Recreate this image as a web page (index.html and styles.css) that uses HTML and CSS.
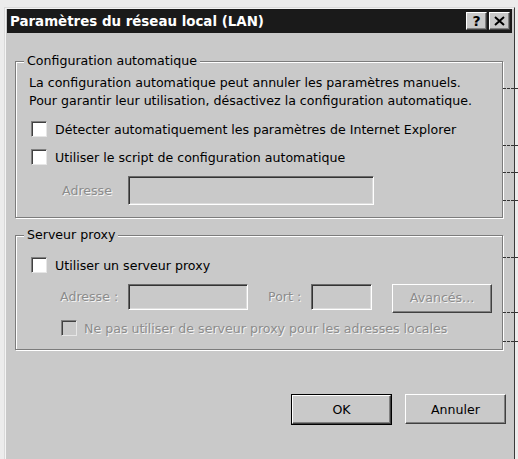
FILE: index.html
```html
<!DOCTYPE html>
<html lang="fr">
<head>
<meta charset="utf-8">
<title>Paramètres du réseau local (LAN)</title>
<link rel="stylesheet" href="styles.css">
</head>
<body>
<div class="window">
  <div class="titlebar">
    <span class="title">Paramètres du réseau local (LAN)</span>
    <div class="tbtns">
      <span class="tbtn help">?</span>
      <span class="tbtn close"><svg width="11" height="10" viewBox="0 0 11 10"><path d="M1 1 L10 9 M10 1 L1 9" stroke="#000" stroke-width="2"/></svg></span>
    </div>
  </div>
  <div class="content">
    <fieldset class="group g1">
      <legend>Configuration automatique</legend>
      <p class="desc">La configuration automatique peut annuler les paramètres manuels.<br>Pour garantir leur utilisation, désactivez la configuration automatique.</p>
      <label class="cbrow r1"><span class="cb"></span>Détecter automatiquement les paramètres de Internet Explorer</label>
      <label class="cbrow r2"><span class="cb"></span>Utiliser le script de configuration automatique</label>
      <div class="addr-row">
        <span class="dis lbl-addr">Adresse</span>
        <span class="input in-script"></span>
      </div>
    </fieldset>
    <fieldset class="group g2">
      <legend>Serveur proxy</legend>
      <label class="cbrow r3"><span class="cb"></span>Utiliser un serveur proxy</label>
      <div class="proxy-row">
        <span class="dis lbl-paddr">Adresse :</span>
        <span class="input in-addr"></span>
        <span class="dis lbl-port">Port :</span>
        <span class="input in-port"></span>
        <span class="btn btn-adv dis">Avancés...</span>
      </div>
      <label class="cbrow r4"><span class="cb cb-dis"></span><span class="dis">Ne pas utiliser de serveur proxy pour les adresses locales</span></label>
    </fieldset>
    <div class="actions">
      <span class="btn btn-ok"><span class="btn-in">OK</span></span>
      <span class="btn btn-cancel">Annuler</span>
    </div>
  </div>
  <div class="ticks">
    <span class="tick" style="top:88px"></span>
    <span class="tick" style="top:145px"></span>
    <span class="tick" style="top:172px"></span>
    <span class="tick" style="top:200px"></span>
    <span class="tick" style="top:257px"></span>
    <span class="tick" style="top:312px"></span>
    <span class="tick" style="top:341px"></span>
  </div>
</div>
</body>
</html>
```
FILE: styles.css
```css
* { box-sizing: border-box; }
html, body { margin: 0; padding: 0; }
body {
  background: #ececec;
  width: 518px;
  height: 459px;
  overflow: hidden;
  font-family: "DejaVu Sans", "Liberation Sans", sans-serif;
  font-size: 12.6px;
  color: #000;
}
.window {
  position: relative;
  margin: 7px 0 0 4px;
  width: 511px;
  height: 460px;
  background: #c9c9c9;
  border-left: 1px solid #dadada;
  border-top: 1px solid #dadada;
  border-right: 1px solid #3a3a3a;
  box-shadow: inset 1px 1px 0 #f4f4f4;
}
.titlebar {
  margin: 1px 2px 0 2px;
  height: 24px;
  background: #1a1a1a;
  display: flex;
  align-items: center;
  justify-content: space-between;
  padding: 0 2px 0 3px;
}
.title {
  color: #fff;
  font-weight: bold;
  font-size: 13.4px;
}
.tbtns { display: flex; gap: 2px; }
.tbtn {
  width: 21px;
  height: 18px;
  background: #c9c9c9;
  border-top: 1px solid #fff;
  border-left: 1px solid #fff;
  border-right: 1px solid #404040;
  border-bottom: 1px solid #404040;
  box-shadow: inset -1px -1px 0 #808080;
  display: flex;
  align-items: center;
  justify-content: center;
  font-weight: bold;
  font-size: 14px;
  line-height: 1;
}
.content {
  padding: 0 11px 0 10px;
}
.group {
  margin: 0;
  padding: 0 0 0 13px;
  border: 1px solid #7c7c7c;
  box-shadow: inset 1px 1px 0 #fff, 1px 1px 0 #fff;
  min-width: 0;
}
.group legend {
  margin-left: -5px;
  padding: 0 3px;
  line-height: 16px;
  background: #c9c9c9;
}
.g1 { margin-top: 20px; height: 165px; }
.g2 { margin-top: 9px; height: 123px; }
.desc {
  margin: 5px 0 0 0;
  line-height: 18px;
}
.cbrow {
  display: flex;
  align-items: center;
  height: 18px;
  gap: 8px;
  padding-left: 2px;
}
.cb {
  width: 16px;
  height: 16px;
  background: #fff;
  border-top: 1px solid #808080;
  border-left: 1px solid #808080;
  border-right: 1px solid #e6e6e6;
  border-bottom: 1px solid #e6e6e6;
  box-shadow: inset 1px 1px 0 #404040;
  flex: none;
}
.cb-dis { background: #c9c9c9; }
.r1 { margin-top: 10px; }
.r2 { margin-top: 10px; }
.addr-row {
  margin-top: 10px;
  display: flex;
  align-items: center;
  padding-left: 33px;
}
.dis {
  color: #8c8c8c;
  text-shadow: 1px 1px 0 #f4f4f4;
}
.lbl-addr { width: 66px; flex: none; }
.input {
  display: block;
  flex: none;
  height: 29px;
  border-top: 1px solid #6a6a6a;
  border-left: 1px solid #6a6a6a;
  border-right: 1px solid #fff;
  border-bottom: 1px solid #fff;
  box-shadow: inset 1px 1px 0 #333, inset -1px -1px 0 #dcdcdc;
}
.in-script { width: 246px; }
.r3 { margin-top: 13px; }
.proxy-row {
  margin-top: 10px;
  display: flex;
  align-items: flex-start;
  padding-left: 31px;
}
.proxy-row .dis { line-height: 26px; }
.lbl-paddr { width: 68px; flex: none; }
.in-addr { width: 120px; height: 26px; }
.lbl-port { margin-left: 20px; width: 43px; flex: none; }
.in-port { width: 61px; height: 26px; }
.btn {
  display: flex;
  align-items: center;
  justify-content: center;
  flex: none;
  background: #c9c9c9;
  border-top: 1px solid #fff;
  border-left: 1px solid #fff;
  border-right: 1px solid #404040;
  border-bottom: 1px solid #404040;
  box-shadow: inset -1px -1px 0 #808080;
}
.proxy-row .btn-adv {
  margin-left: 20px;
  width: 100px;
  height: 29px;
  line-height: 1;
}
.r4 { margin-top: 6px; padding-left: 32px; gap: 7px; }
.actions {
  margin-top: 44px;
  margin-right: -3px;
  display: flex;
  justify-content: flex-end;
  gap: 13px;
}
.btn-ok {
  width: 101px;
  height: 31px;
  border: 1px solid #000;
  box-shadow: none;
  padding: 0;
}
.btn-in {
  width: 100%;
  height: 100%;
  display: flex;
  align-items: center;
  justify-content: center;
  border-top: 1px solid #fff;
  border-left: 1px solid #fff;
  border-right: 1px solid #404040;
  border-bottom: 1px solid #404040;
  box-shadow: inset -1px -1px 0 #808080;
}
.btn-cancel {
  width: 101px;
  height: 30px;
}
.ticks {
  position: absolute;
  top: -8px;
  left: 498px;
  width: 16px;
  height: 400px;
}
.tick {
  position: absolute;
  left: 0;
  width: 15px;
  border-top: 1px dashed #333;
}
```
